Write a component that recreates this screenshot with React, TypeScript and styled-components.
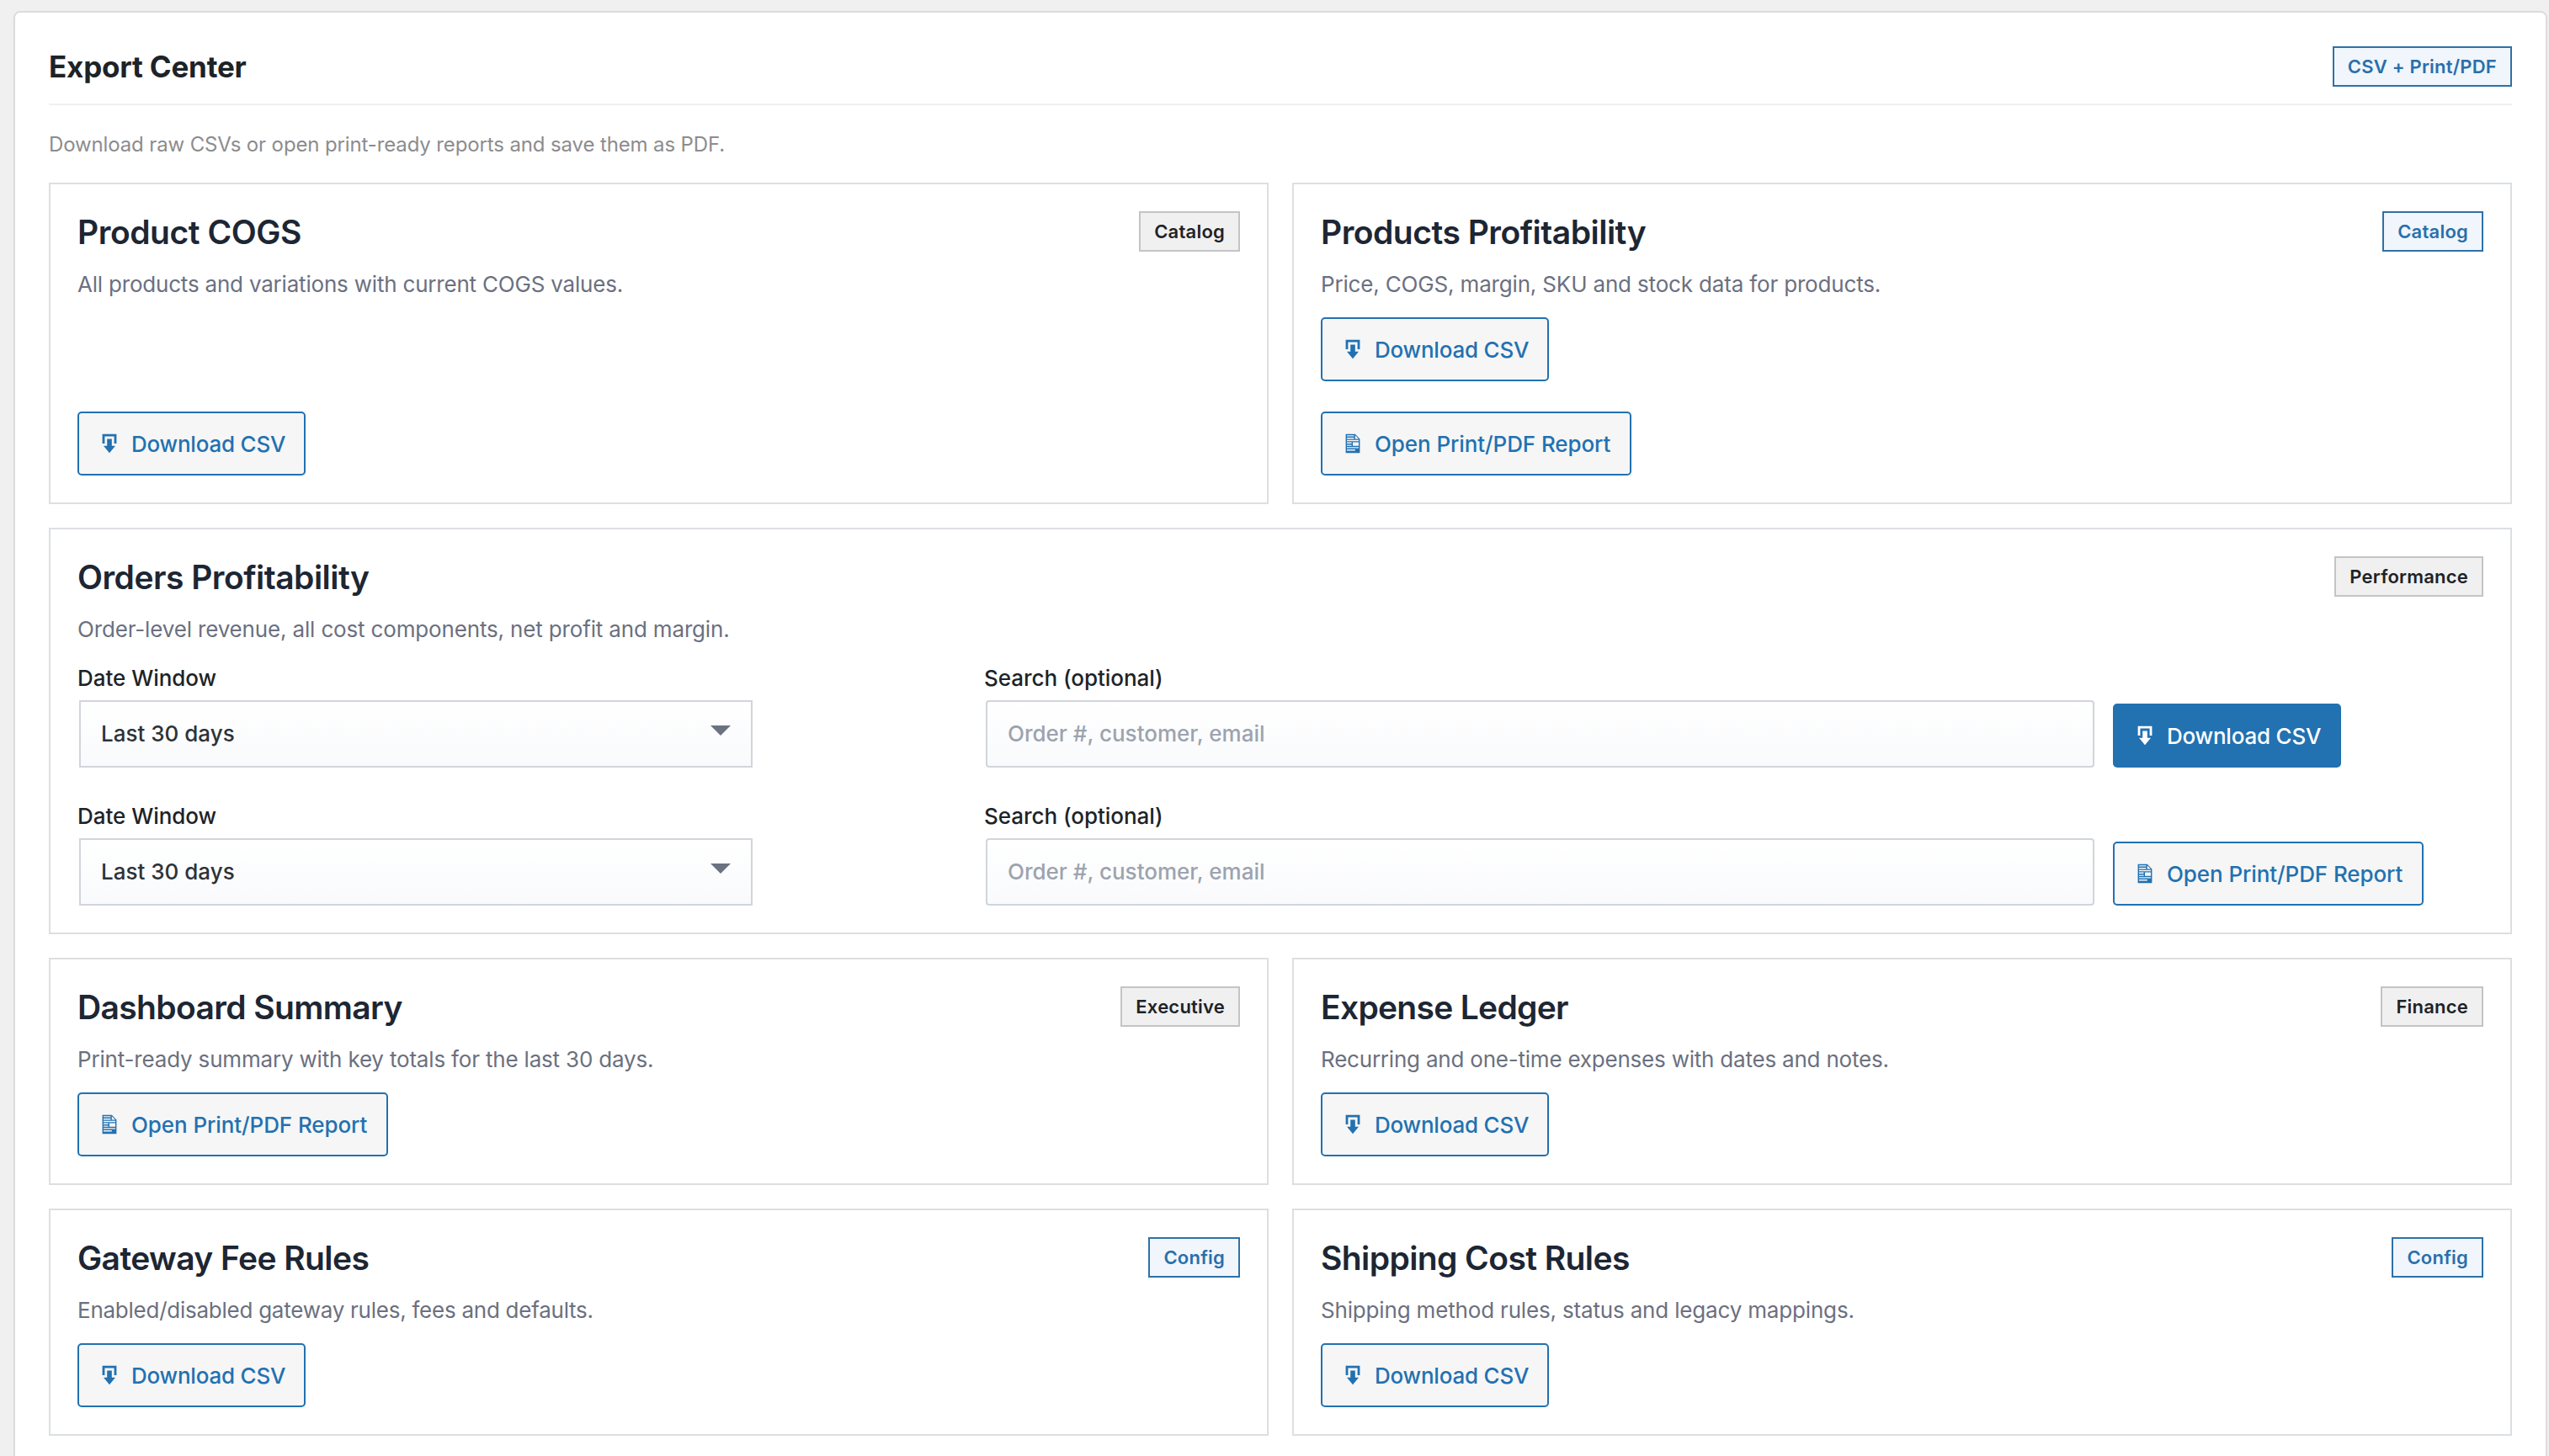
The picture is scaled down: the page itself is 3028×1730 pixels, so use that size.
import React from "react";
import styled, { createGlobalStyle, css } from "styled-components";

const GlobalStyle = createGlobalStyle`
  *, *::before, *::after { box-sizing: border-box; }
  html, body { margin: 0; height: 1730px; overflow: hidden; background: #f0f0f0; }
  body {
    font-family: Inter, "Liberation Sans", sans-serif;
    font-size: 26px;
    color: #1d2327;
    -webkit-font-smoothing: antialiased;
  }
`;

const Page = styled.main`
  height: 1730px;
  overflow: hidden;
  padding: 13px 2px 0 16px;
`;

const Panel = styled.section`
  height: 1800px;
  padding: 40px;
  background: #fff;
  border: 2px solid #dcdcde;
  border-radius: 8px;
  box-shadow: 0 2px 2px rgba(0, 0, 0, 0.04);
`;

const PanelHeader = styled.header`
  display: flex;
  align-items: center;
  justify-content: space-between;
  height: 70px;
  padding-bottom: 20px;
  border-bottom: 2px solid #f0f0f1;
`;

const PanelTitle = styled.h1`
  margin: 0;
  font-size: 35px;
  font-weight: 680;
  line-height: 48px;
  letter-spacing: -0.2px;
  color: #1d2327;
`;

const Intro = styled.p`
  margin: 28px 0 26px;
  font-size: 24px;
  line-height: 38px;
  letter-spacing: -0.13px;
  color: #8c8c8e;
`;

const Grid = styled.div`
  display: grid;
  grid-template-columns: 1fr 1fr;
  gap: 28px;
`;

const Card = styled.article<{ $wide?: boolean }>`
  display: flex;
  flex-direction: column;
  padding: 32px;
  background: #fff;
  border: 2px solid #dcdfe2;
  ${(p) => p.$wide && css`grid-column: 1 / -1;`}
`;

const CardHeader = styled.div`
  display: flex;
  align-items: center;
  justify-content: space-between;
  height: 48px;
`;

const CardTitle = styled.h2<{ $tracking: number }>`
  margin: 0;
  padding-top: 2px;
  font-size: 39px;
  font-weight: 640;
  line-height: 48px;
  letter-spacing: ${(p) => p.$tracking}px;
  color: #1d2633;
`;

const Description = styled.p<{ $tracking: number }>`
  margin: 19px 0 20px;
  line-height: 39px;
  letter-spacing: ${(p) => p.$tracking}px;
  color: #6b7080;
`;

const Badge = styled.span<{ $tone: Tone }>`
  display: inline-flex;
  align-items: center;
  height: 48px;
  padding: 0 16px;
  border: 2px solid ${(p) => (p.$tone === "blue" ? "#2f71a6" : "#c3c4c7")};
  background: ${(p) => (p.$tone === "blue" ? "#f0f6fc" : "#f0f0f1")};
  color: ${(p) => (p.$tone === "blue" ? "#2a6fab" : "#1d2327")};
  font-size: 22px;
  font-weight: 600;
  letter-spacing: 0.22px;
`;

const Actions = styled.div`
  display: flex;
  flex-direction: column;
  align-items: flex-start;
  gap: 36px;
  margin-top: auto;
`;

const ActionButton = styled.button<{ $kind: Kind; $primary?: boolean }>`
  display: inline-flex;
  align-items: center;
  flex: none;
  gap: 12px;
  width: ${(p) => (p.$kind === "csv" ? 271 : 369)}px;
  height: 76px;
  padding: 0 0 0 22px;
  border: 2px solid #2271b1;
  border-radius: 5px;
  background: ${(p) => (p.$primary ? "#2271b1" : "#f6f6f6")};
  color: ${(p) => (p.$primary ? "#fff" : "#2271b1")};
  font: 500 26px/36px Inter, "Liberation Sans", sans-serif;
  letter-spacing: ${(p) => (p.$kind === "csv" ? -0.22 : -0.09)}px;
  white-space: nowrap;

  svg {
    width: 28px;
    height: 28px;
    fill: currentColor;
  }
`;

const ButtonLabel = styled.span`
  padding-top: 2px;
`;

const FilterForm = styled.form`
  display: grid;
  grid-template-columns: 1057px 1321px 1fr;
  column-gap: 20px;
  align-items: end;
  justify-items: start;
  height: 125px;

  & + & {
    margin-top: 39px;
  }
`;

const Field = styled.label`
  display: flex;
  flex-direction: column;
  width: 100%;
  height: 125px;
  justify-content: space-between;
  font-weight: 500;
`;

const FieldLabel = styled.span`
  line-height: 38px;
  letter-spacing: -0.04px;
  color: #1d2327;
`;

const controlStyles = css`
  height: 80px;
  margin: 0 2px;
  border: 2px solid #d1d5db;
  background: linear-gradient(180deg, #ffffff 0%, #f9fafc 100%);
  font: 500 26px/36px Inter, "Liberation Sans", sans-serif;
`;

const SelectBox = styled.div`
  ${controlStyles}
  display: flex;
  align-items: center;
  justify-content: space-between;
  width: 800px;
  padding: 0 24px;
  color: #2c3338;
`;

const Caret = styled.span`
  width: 0;
  height: 0;
  margin-top: -8px;
  border-left: 12px solid transparent;
  border-right: 12px solid transparent;
  border-top: 12px solid #6b7280;
`;

const SearchInput = styled.input`
  ${controlStyles}
  width: 1317px;
  padding: 0 24px 2px;
  border-radius: 4px;
  outline: none;

  &::placeholder {
    color: #9ca3af;
    opacity: 1;
  }
`;

type Tone = "gray" | "blue";
type Kind = "csv" | "report";

const DownloadIcon = () => (
  <svg viewBox="0 0 20 20" aria-hidden="true">
    <path d="M14.01 4v6h2V2H4v8h2.01V4h8zm-2 2v6h3l-5 6-5-6h3V6h4z" />
  </svg>
);

const DocumentIcon = () => (
  <svg viewBox="0 0 20 20" aria-hidden="true">
    <path d="M12 2l4 4v12H4V2h8zM5 3v1h6V3H5zm7 3h3l-3-3v3zM5 5v1h6V5H5zm10 3V7H5v1h10zM5 9v1h4V9H5zm10 3V9h-5v3h5zM5 11v1h4v-1H5zm10 3v-1H5v1h10zm-3 2v-1H5v1h7z" />
  </svg>
);

const labels: Record<Kind, string> = {
  csv: "Download CSV",
  report: "Open Print/PDF Report",
};

function ExportButton({ kind, primary }: { kind: Kind; primary?: boolean }) {
  return (
    <ActionButton type="button" $kind={kind} $primary={primary}>
      {kind === "csv" ? <DownloadIcon /> : <DocumentIcon />}
      <ButtonLabel>{labels[kind]}</ButtonLabel>
    </ActionButton>
  );
}

function OrderFilter({ kind, primary }: { kind: Kind; primary?: boolean }) {
  return (
    <FilterForm>
      <Field as="div">
        <FieldLabel>Date Window</FieldLabel>
        <SelectBox role="combobox" tabIndex={0}>
          Last 30 days
          <Caret />
        </SelectBox>
      </Field>
      <Field>
        <FieldLabel>Search (optional)</FieldLabel>
        <SearchInput type="text" placeholder="Order #, customer, email" />
      </Field>
      <ExportButton kind={kind} primary={primary} />
    </FilterForm>
  );
}

interface CardData {
  title: string;
  titleTracking: number;
  description: string;
  textTracking: number;
  badge: string;
  tone: Tone;
  actions?: Kind[];
  wide?: boolean;
}

const cards: CardData[] = [
  { title: "Product COGS", titleTracking: -0.45, description: "All products and variations with current COGS values.", textTracking: -0.2, badge: "Catalog", tone: "gray", actions: ["csv"] },
  { title: "Products Profitability", titleTracking: -0.5, description: "Price, COGS, margin, SKU and stock data for products.", textTracking: -0.165, badge: "Catalog", tone: "blue", actions: ["csv", "report"] },
  { title: "Orders Profitability", titleTracking: -0.51, description: "Order-level revenue, all cost components, net profit and margin.", textTracking: -0.158, badge: "Performance", tone: "gray", wide: true },
  { title: "Dashboard Summary", titleTracking: -0.63, description: "Print-ready summary with key totals for the last 30 days.", textTracking: -0.18, badge: "Executive", tone: "gray", actions: ["report"] },
  { title: "Expense Ledger", titleTracking: -0.71, description: "Recurring and one-time expenses with dates and notes.", textTracking: -0.213, badge: "Finance", tone: "gray", actions: ["csv"] },
  { title: "Gateway Fee Rules", titleTracking: -0.59, description: "Enabled/disabled gateway rules, fees and defaults.", textTracking: -0.25, badge: "Config", tone: "blue", actions: ["csv"] },
  { title: "Shipping Cost Rules", titleTracking: -0.59, description: "Shipping method rules, status and legacy mappings.", textTracking: -0.17, badge: "Config", tone: "blue", actions: ["csv"] },
];

export default function App() {
  return (
    <>
      <GlobalStyle />
      <Page>
        <Panel>
          <PanelHeader>
            <PanelTitle>Export Center</PanelTitle>
            <Badge $tone="blue">CSV + Print/PDF</Badge>
          </PanelHeader>
          <Intro>Download raw CSVs or open print-ready reports and save them as PDF.</Intro>
          <Grid>
            {cards.map((card) => (
              <Card key={card.title} $wide={card.wide}>
                <CardHeader>
                  <CardTitle $tracking={card.titleTracking}>{card.title}</CardTitle>
                  <Badge $tone={card.tone}>{card.badge}</Badge>
                </CardHeader>
                <Description $tracking={card.textTracking}>{card.description}</Description>
                {card.wide && (
                  <>
                    <OrderFilter kind="csv" primary />
                    <OrderFilter kind="report" />
                  </>
                )}
                {card.actions && (
                  <Actions>
                    {card.actions.map((kind) => (
                      <ExportButton key={kind} kind={kind} />
                    ))}
                  </Actions>
                )}
              </Card>
            ))}
          </Grid>
        </Panel>
      </Page>
    </>
  );
}
